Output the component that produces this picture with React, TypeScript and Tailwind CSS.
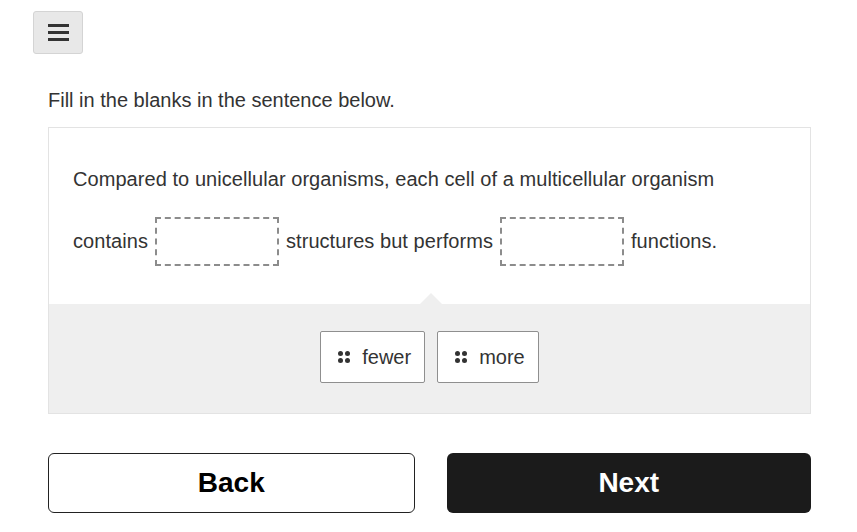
import React from "react";

function Grip() {
  return (
    <span className="grid grid-cols-2 gap-[2px] w-[12px]">
      <span className="w-[5px] h-[5px] rounded-full bg-[#333]" />
      <span className="w-[5px] h-[5px] rounded-full bg-[#333]" />
      <span className="w-[5px] h-[5px] rounded-full bg-[#333]" />
      <span className="w-[5px] h-[5px] rounded-full bg-[#333]" />
    </span>
  );
}

function Blank() {
  return (
    <span className="inline-block w-[124px] h-[49px] border-2 border-dashed border-[#8c8c8c] mx-[7px]" />
  );
}

function Chip({ label }: { label: string }) {
  return (
    <div className="flex items-center gap-[12px] h-[52px] pl-[17px] pr-[13px] bg-white border border-[#8f8f8f] rounded-[2px] text-[20px] text-[#333]">
      <Grip />
      <span>{label}</span>
    </div>
  );
}

export default function App() {
  return (
    <div
      className="w-full h-[532px] bg-white text-[#333]"
      style={{ fontFamily: '"Liberation Sans", Arial, sans-serif' }}
    >
      <div className="pt-[11px] pl-[33px]">
        <button className="w-[50px] h-[43px] bg-[#e8e8e8] border border-[#d4d4d4] rounded-[3px] flex flex-col items-center justify-center gap-[4px]">
          <span className="block w-[21px] h-[3px] bg-[#333]" />
          <span className="block w-[21px] h-[3px] bg-[#333]" />
          <span className="block w-[21px] h-[3px] bg-[#333]" />
        </button>
      </div>
      <div className="pl-[48px] pr-[46px]">
        <p className="mt-[33px] text-[20px] leading-[27px] text-[#333]">
          Fill in the blanks in the sentence below.
        </p>
        <div className="mt-[13px] border border-[#e3e3e3]">
          <div className="pt-[37px] pb-[39px] pl-[24px] text-[20px] tracking-[0.06px] text-[#333]">
            <div className="h-[28px] leading-[28px]">
              Compared to unicellular organisms, each cell of a multicellular organism
            </div>
            <div className="mt-[24px] flex items-center h-[48px]">
              <span>contains</span>
              <Blank />
              <span>structures but performs</span>
              <Blank />
              <span>functions.</span>
            </div>
          </div>
          <div className="relative bg-[#efefef] pt-[27px] pb-[30px] flex justify-center gap-[12px]">
            <span className="absolute -top-[11px] left-[371px] w-0 h-0 border-l-[11px] border-r-[11px] border-b-[11px] border-l-transparent border-r-transparent border-b-[#efefef]" />
            <Chip label="fewer" />
            <Chip label="more" />
          </div>
        </div>
        <div className="mt-[39px] flex gap-[32px]">
          <button className="flex-1 h-[60px] border border-[#222] rounded-[6px] bg-white text-black text-[28px] font-bold">
            Back
          </button>
          <button className="flex-1 h-[60px] rounded-[6px] bg-[#1b1b1b] text-white text-[28px] font-bold">
            Next
          </button>
        </div>
      </div>
    </div>
  );
}
